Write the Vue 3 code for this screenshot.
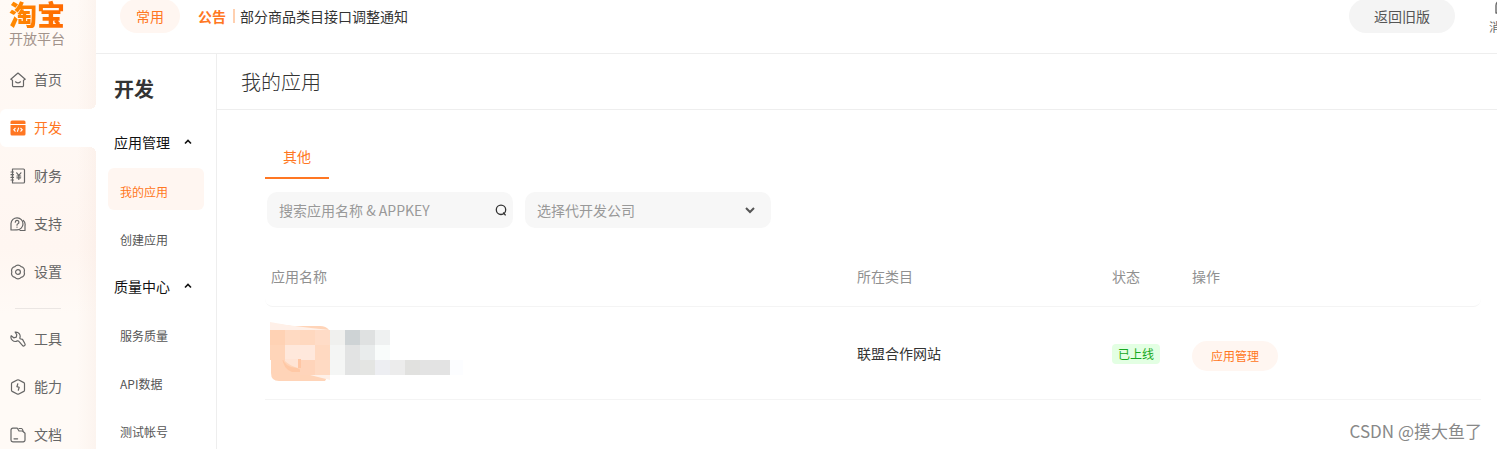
<template>
  <div class="page">
    <aside class="sidebar">
      <a href="#" class="brand">
        <span class="brand-name">淘宝</span>
        <span class="brand-sub">开放平台</span>
      </a>
      <nav class="side-nav">
        <template v-for="item in sideItems" :key="item.label">
          <hr v-if="item.divided" class="side-divider" />
          <a href="#" class="side-item" :class="{ active: item.active }">
            <svg v-if="item.active" class="side-icon" viewBox="0 0 16 16">
              <path d="M.5 4V2A1.500 1.500 0 0 1 2 .5h12A1.500 1.500 0 0 1 15.500 2v2z" fill="currentColor" />
              <path d="M.5 5h15v9a1.500 1.500 0 0 1-1.500 1.500H2A1.500 1.500 0 0 1 .5 14z" fill="currentColor" />
              <path d="M5.500 8 3.800 9.800l1.700 1.700M10.500 8l1.700 1.800-1.700 1.700M8.700 7.800l-1.400 4" fill="none" stroke="#fff" stroke-width="1.100" />
            </svg>
            <svg v-else class="side-icon" viewBox="0 0 16 16" fill="none" stroke="currentColor" stroke-width="1.200" stroke-linecap="round" stroke-linejoin="round">
              <path v-for="d in item.paths" :key="d" :d="d" />
            </svg>
            <span class="side-label">{{ item.label }}</span>
          </a>
        </template>
      </nav>
    </aside>

    <div class="body">
      <header class="top-bar">
        <button type="button" class="pill pill-common">常用</button>
        <strong class="notice-tag">公告</strong>
        <a href="#" class="notice">部分商品类目接口调整通知</a>
        <button type="button" class="pill pill-old">返回旧版</button>
        <a href="#" class="message">
          <svg class="message-icon" viewBox="0 0 18 18" fill="none" stroke="currentColor" stroke-width="1.400" stroke-linejoin="round">
            <path d="M4 14V6.500a5 5 0 0 1 5-5h2a5 5 0 0 1 5 5V14z" />
            <path d="M7 8.500h6" />
          </svg>
          <span>消息</span>
        </a>
      </header>

      <div class="columns">
        <nav class="sub-nav">
          <h2 class="sub-title">开发</h2>
          <section v-for="group in groups" :key="group.title">
            <button type="button" class="group-title">
              <span>{{ group.title }}</span>
              <svg class="caret" viewBox="0 0 8 8" fill="none" stroke="currentColor" stroke-width="1.600">
                <path d="M1 5.500 4 2.500l3 3" />
              </svg>
            </button>
            <a
              v-for="(name, i) in group.items"
              :key="name"
              href="#"
              class="sub-item"
              :class="{ active: group.current === i }"
            >{{ name }}</a>
          </section>
        </nav>

        <main class="main">
          <h1 class="main-title">我的应用</h1>
          <div class="content">
            <div class="tabs" role="tablist">
              <button type="button" class="tab" role="tab" aria-selected="true">其他</button>
            </div>

            <form class="filters" @submit.prevent>
              <div class="field">
                <input v-model="keyword" type="text" class="field-input" placeholder="搜索应用名称 & APPKEY" aria-label="搜索应用名称 & APPKEY" />
                <button type="submit" class="search-button" aria-label="搜索">
                  <svg viewBox="0 0 12 12" fill="none" stroke="currentColor" stroke-width="1.300">
                    <circle cx="6" cy="5.800" r="4.700" />
                    <path d="M8.200 8.500l2.400 2.800" />
                  </svg>
                </button>
              </div>
              <div class="field">
                <select v-model="company" class="field-input" aria-label="选择代开发公司">
                  <option value="">选择代开发公司</option>
                </select>
                <svg class="select-arrow" viewBox="0 0 10 8" fill="none" stroke="currentColor" stroke-width="2">
                  <path d="M1 2l4 4 4-4" />
                </svg>
              </div>
            </form>

            <table class="apps">
              <thead>
                <tr>
                  <th class="col-name">应用名称</th>
                  <th class="col-category">所在类目</th>
                  <th class="col-status">状态</th>
                  <th class="col-action">操作</th>
                </tr>
              </thead>
              <tbody>
                <tr>
                  <td>
                    <svg class="app-cover" viewBox="0 0 195 60">
                      <path d="M0 1l22 3h28q6 0 9 4v44l-4 7H9q-8 0-8-8V33H0z" fill="#ffd4b8" />
                      <path d="M0 0l17 3 24 3 19 2H0z" fill="#fff0e8" />
                      <path d="M40 53l20-1v6z" fill="#fff0e8" />
                      <path d="M12 35q3 11 15 11l8 4H22q-9-3-10-15z" fill="#ffc8a5" />
                      <rect
                        v-for="c in tiles"
                        :key="c.x + '-' + c.y"
                        :x="c.x"
                        :y="c.y"
                        :width="c.w"
                        height="15"
                        :fill="c.fill"
                      />
                      <path d="M15 37h13v9q-8-2-13-7z" fill="#ffe4d5" />
                      <path d="M28 37h3v9h-3z" fill="#ffc6a4" />
                    </svg>
                  </td>
                  <td>联盟合作网站</td>
                  <td><span class="status">已上线</span></td>
                  <td><button type="button" class="manage">应用管理</button></td>
                </tr>
              </tbody>
            </table>
          </div>
        </main>
      </div>
    </div>

    <div class="watermark">CSDN @摸大鱼了</div>
  </div>
</template>

<script setup>
import { ref } from 'vue'

const keyword = ref('')
const company = ref('')

const sideItems = [
  {
    label: '首页',
    paths: ['M.8 7.300 8 1l7.200 6.300-1.700.9v5.300a1.200 1.200 0 0 1-1.200 1.200H3.700a1.200 1.200 0 0 1-1.200-1.200V8.200z', 'M5.500 9.800q2.500 2.300 5 0']
  },
  { label: '开发', active: true },
  {
    label: '财务',
    paths: ['M2.500 1h11a1 1 0 0 1 1 1v12a1 1 0 0 1-1 1h-11z', 'M1 4h2.500M1 6.700h2.500M1 9.400h2.500M1 12h2.500', 'M6.700 4.800l2.100 2.700 2.100-2.700M8.800 7.500v4M6.900 8h3.800M6.900 9.800h3.800']
  },
  {
    label: '支持',
    paths: ['M1 14V7.500A6 6 0 1 1 7 13.800z', 'M5.300 6.200a1.800 1.800 0 1 1 2.600 1.600q-.9.400-.9 1.400M7 11v.2', 'M13.300 4.500a5.500 5.500 0 0 1 1.700 5.300v4.700h-5']
  },
  {
    label: '设置',
    paths: ['M4.900 2.600a4 4 0 0 1 6.200 0a4 4 0 0 1 3.100 5.400a4 4 0 0 1-3.100 5.400a4 4 0 0 1-6.200 0a4 4 0 0 1-3.100-5.400a4 4 0 0 1 3.100-5.400z', 'M8 5.600a2.400 2.400 0 1 0 0 4.800 2.400 2.400 0 0 0 0-4.800z']
  },
  {
    label: '工具',
    divided: true,
    paths: ['M5.200 1.100a4.300 4.300 0 0 1 4.600 5.900q.2.900 1 1l1.700.4 2.300 4.100a1.500 1.500 0 0 1-2.400 1.900l-3.500-4q-.6-.8-1.600-.5A4.300 4.300 0 0 1 1.200 4.700l2.500 2.100 2.600-.6.500-2.500z']
  },
  {
    label: '能力',
    paths: ['M7.200 1q.8-.4 1.600 0l5 2.600q.7.400.7 1.200v6.400q0 .8-.7 1.200l-5 2.600q-.8.400-1.600 0l-5-2.600q-.7-.4-.7-1.200V4.800q0-.8.700-1.200z', 'M7.800 4.800 6.900 7.700l2.300.6-.9 2.900']
  },
  {
    label: '文档',
    paths: ['M3 1.200h4.300l1.700 2.800h3.500L15 6.200V13a1.800 1.800 0 0 1-1.800 1.800H2.800A1.800 1.800 0 0 1 1 13V3a1.800 1.800 0 0 1 1.800-1.800z', 'M4 11.800h3.600', 'M9 1.500h2.500q1.300.2 1.500 2.500']
  }
]

const groups = [
  { title: '应用管理', items: ['我的应用', '创建应用'], current: 0 },
  { title: '质量中心', items: ['服务质量', 'API数据', '测试帐号'], current: -1 }
]

const tileRows = [
  ['#ffd2b4', '#ffdac2', '#ffd8bf', '#ffdcc7', '#f0f0ee', '#ced3d5', '#dfe1e1', '#eff1f1'],
  ['#ffd5b9', '#ffe8db', '#ffe8dc', '#ffd9c1', '#f4f5f4', '#e2e3e3', '#e9ecec', '#f9fcfb'],
  ['', '', '#ffd4ba', '#ffdac3', '#f5f6f5', '#e2e3e3', '#e4e5e3', '#edeef2', '#ececec', '#e1e1df', '#e3e3e3', '#e3e3e3']
]

const tiles = tileRows.flatMap((row, r) =>
  row.map((fill, i) => ({ x: i * 15, y: 8 + r * 15, w: 15, fill })).filter((c) => c.fill)
)
tiles.push({ x: 180, y: 38, w: 13, fill: '#fcfdff' })
</script>

<style>
body {
  background: #fff;
}
</style>

<style scoped>
.page {
  position: relative;
  display: flex;
  height: 100vh;
  overflow: hidden;
  color: #333;
  font-family: "Noto Sans CJK SC", sans-serif;
  font-size: 14px;
  font-weight: 400;
  line-height: 20px;
}

.page * {
  box-sizing: border-box;
}

a {
  color: inherit;
  text-decoration: none;
}

button,
input,
select {
  margin: 0;
  padding: 0;
  border: none;
  outline: none;
  background: none;
  color: inherit;
  font: inherit;
}

button {
  cursor: pointer;
}

.sidebar {
  flex: 0 0 96px;
  background: linear-gradient(to right, transparent 80%, rgba(225, 190, 175, 0.1)), linear-gradient(#fffaf6, #fff6f1 55%, #fffaf6 70%);
}

.brand {
  display: flex;
  flex-direction: column;
  height: 61px;
  padding-left: 9px;
}

.brand-name {
  background: linear-gradient(to right, #ff8a00, #ff5500);
  background-clip: text;
  color: transparent;
  font-size: 28px;
  font-weight: 900;
  line-height: 28px;
}

.brand-sub {
  color: #a2938b;
}

.side-nav {
  display: flex;
  flex-direction: column;
  gap: 10px;
}

.side-item {
  position: relative;
  display: flex;
  flex-shrink: 0;
  align-items: center;
  gap: 8px;
  height: 38px;
  padding-left: 10px;
  color: #666;
}

.side-item.active {
  border-radius: 6px 0 0 6px;
  background: #fff;
  color: #ff7723;
}

.side-item.active::before,
.side-item.active::after {
  content: "";
  position: absolute;
  right: 0;
  width: 6px;
  height: 6px;
}

.side-item.active::before {
  bottom: 100%;
  background: radial-gradient(circle at 0 0, transparent 6px, #fff 6px);
}

.side-item.active::after {
  top: 100%;
  background: radial-gradient(circle at 0 100%, transparent 6px, #fff 6px);
}

.side-icon {
  width: 16px;
  height: 16px;
}

.side-label {
  padding-bottom: 2px;
}

.side-divider {
  width: 46px;
  margin: 7px 0 1px 15px;
  border: none;
  border-top: 1px solid #ebe6e3;
}

.body {
  display: flex;
  flex: 1;
  flex-direction: column;
  min-width: 0;
}

.top-bar {
  display: flex;
  flex: 0 0 54px;
  align-items: center;
  min-height: 0;
  height: 54px;
  padding: 0 0 21px 24px;
  border-bottom: 1px solid #eee;
}

.pill {
  flex-shrink: 0;
  height: 34px;
  border-radius: 18px;
}

.pill-common {
  width: 60px;
  background: #fff6f1;
  color: #ff7723;
}

.notice-tag {
  margin-left: 18px;
  padding-right: 7px;
  border-right: 2px solid #ffd0b0;
  color: #ff7723;
  font-weight: 700;
  line-height: 14px;
}

.notice {
  margin-left: 5px;
}

.pill-old {
  width: 106px;
  margin-left: auto;
  background: #f4f4f4;
  color: #555;
}

.message {
  display: flex;
  flex-direction: column;
  flex-shrink: 0;
  align-items: center;
  margin-right: -16px;
  margin-left: 34px;
  padding-top: 4px;
  color: #666;
  font-size: 12px;
}

.message-icon {
  width: 18px;
  height: 18px;
}

.columns {
  display: flex;
  flex: 1;
  min-height: 0;
}

.sub-nav {
  flex: 0 0 121px;
  padding: 20px 12px 0;
  border-right: 1px solid #eee;
}

.sub-title {
  margin: 0 0 16px 6px;
  font-size: 20px;
  font-weight: 700;
  line-height: 30px;
}

.group-title {
  display: flex;
  align-items: center;
  gap: 14px;
  height: 44px;
  margin-bottom: 4px;
  padding-left: 6px;
  color: #111;
}

.caret {
  width: 8px;
  height: 8px;
}

.sub-item {
  display: block;
  height: 42px;
  margin-bottom: 6px;
  padding: 6px 12px 0;
  border-radius: 6px;
  color: #555;
  font-size: 12px;
  line-height: 36px;
}

.sub-item.active {
  background: #fff6f1;
  color: #ff7723;
}

.main {
  flex: 1;
  min-width: 0;
}

.main-title {
  margin: 0;
  padding: 14px 24px 13px;
  border-bottom: 1px solid #eee;
  font-size: 20px;
  font-weight: 300;
  line-height: 28px;
}

.content {
  padding: 25px 16px 0 48px;
}

.tab {
  width: 64px;
  height: 44px;
  border-bottom: 2px solid #ff7723;
  color: #ff7723;
}

.tabs {
  display: flex;
}

.filters {
  display: flex;
  gap: 12px;
  margin: 13px 2px 0;
}

.field {
  display: flex;
  align-items: center;
  width: 246px;
  height: 36px;
  padding-right: 6px;
  border-radius: 10px;
  background: #f7f7f7;
}

.field-input {
  flex: 1;
  min-width: 0;
  height: 36px;
  padding-left: 12px;
  color: #999;
  appearance: none;
}

.field-input::placeholder {
  color: #999;
}

.search-button {
  display: flex;
  color: #333;
}

.search-button svg {
  width: 12px;
  height: 12px;
}

.select-arrow {
  width: 10px;
  height: 8px;
  margin-right: 10px;
  color: #555;
  pointer-events: none;
}

.apps {
  width: 100%;
  margin-top: 20px;
  border-collapse: separate;
  border-spacing: 0;
  table-layout: fixed;
}

.apps th,
.apps td {
  padding: 0 0 0 6px;
  border-bottom: 1px solid #f4f4f4;
  text-align: left;
}

.apps th {
  height: 59px;
  padding-bottom: 2px;
  color: #909090;
  font-weight: 400;
}

.apps th:first-child {
  border-bottom-left-radius: 8px;
}

.apps th:last-child {
  border-bottom-right-radius: 8px;
}

.apps td {
  height: 93px;
}

.apps td:first-child {
  padding-left: 5px;
}

.col-category {
  width: 255px;
}

.col-status {
  width: 80px;
}

.col-action {
  width: 295px;
}

.app-cover {
  display: block;
  width: 195px;
  height: 60px;
  margin-bottom: 2px;
}

.status {
  display: inline-block;
  width: 48px;
  border-radius: 4px;
  background: #e3ffe3;
  color: #17a821;
  font-size: 12px;
  text-align: center;
}

.manage {
  width: 86px;
  height: 30px;
  margin-top: 6px;
  border-radius: 15px;
  background: #fff6f1;
  color: #ff7723;
  font-size: 12px;
}

.watermark {
  position: absolute;
  right: 15px;
  bottom: 6px;
  color: #888;
  font-size: 17px;
  line-height: 24px;
}
</style>
